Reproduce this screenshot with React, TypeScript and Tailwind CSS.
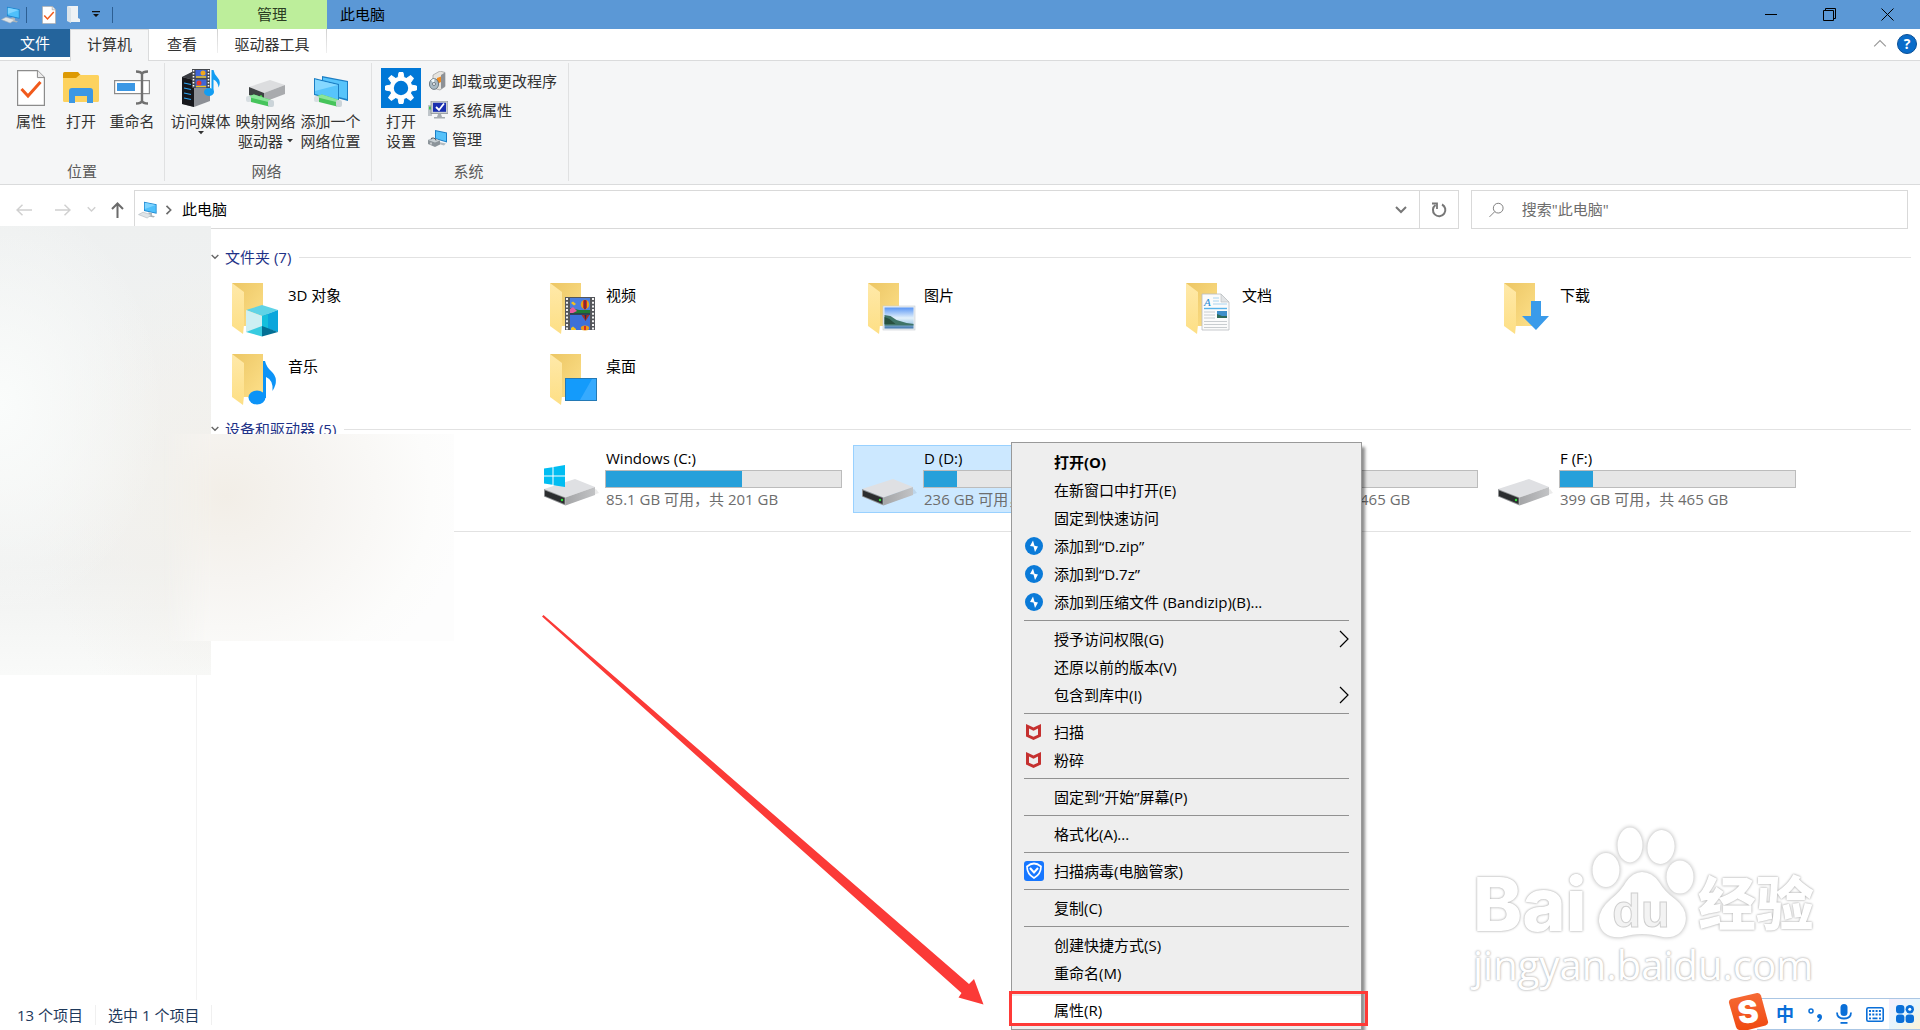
import type { ReactNode } from "react";

type IconProps = { className?: string };

/* ---------- small icons ---------- */

function PcIcon({ className }: IconProps) {
  return (
    <svg viewBox="0 0 20 18" className={className} aria-hidden="true">
      <path d="M6 0.8 18.6 3.2v9.6L6 10z" fill="#1b86cf" />
      <path d="M6.8 1.8 17.8 3.9v7.9L6.8 9.3z" fill="#4fc0fb" />
      <path d="M6.8 1.8 17.8 3.9 6.8 8z" fill="#7fd4ff" />
      <path d="M10.5 11.2 14 12v2.4l3 .8-1.5 1.3-6.5-1.6 1.5-.7z" fill="#aab4bb" />
      <path d="M0.5 13.6 5 11.2l8.6 2.6-4.4 3.2z" fill="#dfe4e7" stroke="#aeb7bd" strokeWidth="0.6" />
    </svg>
  );
}

function CheckDoc({ className }: IconProps) {
  return (
    <svg viewBox="0 0 28 36" className={className} aria-hidden="true">
      <path d="M.6.6h19.8l7 7v27.8H.6z" fill="#fff" stroke="#8c8c8c" strokeWidth="1.2" />
      <path d="M20.4.6v7h7" fill="#ececec" stroke="#8c8c8c" strokeWidth="1" />
      <path d="m4.5 19 6.5 7L23.5 12" fill="none" stroke="#f15a1c" strokeWidth="3" />
    </svg>
  );
}

function OpenFolder() {
  return (
    <svg width="36" height="32" viewBox="0 0 36 32" aria-hidden="true">
      <path d="M0 1.5Q0 0 1.5 0H15l3 3.5L16 7H0z" fill="#dd9a04" />
      <path d="M0 6h13l3.5-3H34.500q1.500 0 1.500 1.500V28.500Q36 30 34.500 30H1.500Q0 30 0 28.500z" fill="#fdd25e" />
      <path d="M6 31V19q0-3 3-3h18q3 0 3 3v12h-6v-7H12v7z" fill="#3b97e4" />
    </svg>
  );
}

function RenameIcon() {
  return (
    <svg width="36" height="36" viewBox="0 0 36 36" aria-hidden="true">
      <rect x=".6" y="10.600" width="34.800" height="13" fill="#fff" stroke="#8b8b8b" strokeWidth="1.200" />
      <rect x="3" y="13" width="18" height="8" fill="#3b97e4" />
      <path d="M22 1.500q5 0 6 2.500 1-2.500 6-2.500M22 33.500q5 0 6-2.500 1 2.500 6 2.500M28 4v27" fill="none" stroke="#707070" strokeWidth="2.400" />
    </svg>
  );
}

function MediaIcon() {
  return (
    <svg width="40" height="38" viewBox="0 0 40 38" aria-hidden="true">
      <path d="M1 8 11 3l18 2v27L13 38 1 35z" fill="#8d9096" />
      <path d="M1 8l12 3v27L1 35z" fill="#17181c" />
      <path d="M1 8 11 3l9 1-7 7z" fill="#3a3c42" />
      <path d="M3 14l7 1.500M3 19l7 1.500M3 24l7 1.500M3 29l7 1.500" stroke="#2fa6f5" strokeWidth="1.200" />
      <rect x="11" y="0" width="18" height="19" fill="#44474c" />
      <path d="M12.500 1v17M27.500 1v17" stroke="#fff" strokeWidth="1.600" strokeDasharray="1.500 1.500" />
      <rect x="14.500" y="1" width="11" height="8" fill="#3f66d8" />
      <rect x="14.500" y="10.500" width="11" height="8" fill="#3f66d8" />
      <circle cx="22" cy="4" r="2.500" fill="#f2a81c" />
      <circle cx="18" cy="14" r="2.500" fill="#e93c2f" />
      <path d="M15 8h10M15 17.500h10" stroke="#f3c61d" strokeWidth="1.500" />
      <ellipse cx="28" cy="23" rx="5" ry="4" fill="#139df2" />
      <path d="M30.500 23V1h2q1 5 4 7.500 4 4 1 10-.5-6-5-8V23z" fill="#139df2" />
    </svg>
  );
}

function Cable() {
  return (
    <>
      <path d="M3 0 8-1.500 25 4l-2 6.500L5 6z" fill="#46c45b" />
      <path d="M3 0 8-1.500 25 4l-.8 2.500L4 1.500z" fill="#8be59a" />
      <rect x="0" y="0" width="5" height="6" rx="2" fill="#d7dee2" />
      <rect x="22" y="4" width="6" height="7" rx="2" fill="#cbd4d9" />
    </>
  );
}

function NetDriveIcon() {
  return (
    <svg width="40" height="38" viewBox="0 -9 40 38" aria-hidden="true">
      <path d="M3 9 24 2l15 5-21 8z" fill="#dcdddf" />
      <path d="M3 9l15 6v8L3 17z" fill="#3e4143" />
      <path d="M18 15 39 7v9l-21 8z" fill="#a9abae" />
      <circle cx="15" cy="18.500" r="1.200" fill="#45e04a" />
      <g transform="translate(0 18)">
        <Cable />
      </g>
    </svg>
  );
}

function NetPlaceIcon() {
  return (
    <svg width="36" height="38" viewBox="0 -6 36 38" aria-hidden="true">
      <path d="M9 1 35 6v20L9 19z" fill="#1c7ec4" />
      <path d="M10 2.500 34 7v17L10 18z" fill="#57c4fb" />
      <path d="M1 3l25 6v18L1 20z" fill="#1c7ec4" />
      <path d="M2 4.500l23 5.500v15.500L2 19z" fill="#57c4fb" />
      <path d="M2 4.500 25 10 2 16z" fill="#86d8ff" />
      <g transform="translate(1 21)">
        <Cable />
      </g>
    </svg>
  );
}

function SettingsTile() {
  const teeth = [0, 45, 90, 135, 180, 225, 270, 315];
  return (
    <svg width="40" height="40" viewBox="0 0 40 40" aria-hidden="true">
      <rect width="40" height="40" fill="#0078d7" />
      {teeth.map((a) => (
        <path key={a} d="M17 10l1-5.500h4l1 5.500z" fill="#fff" stroke="#fff" strokeLinejoin="round" transform={`rotate(${a} 20 20)`} />
      ))}
      <circle cx="20" cy="20" r="9.200" fill="none" stroke="#fff" strokeWidth="4" />
    </svg>
  );
}

function UninstallIcon() {
  return (
    <svg width="17" height="20" viewBox="0 0 17 20" aria-hidden="true">
      <path d="M4 4 11 0l5 1.500v14L11 19l-7-2z" fill="#e6e4df" stroke="#9a9a9a" strokeWidth=".7" />
      <path d="M12 4l4-2.500v14L12 18z" fill="#8d9196" />
      <path d="M8 7l4-1.500V11l-4 2z" fill="#ee8b22" />
      <ellipse cx="5" cy="13" rx="4.600" ry="5.400" fill="#a9bac4" stroke="#59666e" strokeWidth=".8" />
      <path d="M5 13 2 9l3.500-1.500z" fill="#f2fafd" />
      <circle cx="5" cy="13" r="1.500" fill="#fff" stroke="#59666e" strokeWidth=".8" />
    </svg>
  );
}

function SystemPropsIcon() {
  return (
    <svg width="20" height="18" viewBox="0 0 20 18" aria-hidden="true">
      <rect x="0" y="4" width="4" height="11" fill="#bfc5ca" />
      <rect x="1" y="5.500" width="2" height="3" fill="#3fc14a" />
      <rect x="3" y="0" width="17" height="12.500" fill="#c9ced2" stroke="#81888d" strokeWidth=".7" />
      <rect x="5" y="1.800" width="13" height="9" fill="#1a2fb0" />
      <path d="m8 6 3 3 5-6.500" fill="none" stroke="#fff" strokeWidth="1.800" />
      <path d="M10 13h3l1 3h3v1.500H6V16h3z" fill="#a5abb0" />
    </svg>
  );
}

function ManageIcon() {
  return (
    <svg width="20" height="17" viewBox="0 0 20 17" aria-hidden="true">
      <path d="M7 0l12 2.500v10L7 9z" fill="#1b7ec6" />
      <path d="M8 1.200l10 2v8L8 8.300z" fill="#56c2fa" />
      <path d="M11 12l7 1.500-2 2-7-2z" fill="#b4bcc2" />
      <path d="M0 10l5-2 7 2.500v4L7 17l-7-3z" fill="#8c949a" />
      <path d="M0 10l5-2 7 2.500-5 2z" fill="#c9d0d4" />
      <path d="M3 9.500q0-2 2.500-1.500T8 10.500" fill="none" stroke="#565d62" />
      <path d="M3 12.500v2" stroke="#fff" />
    </svg>
  );
}

function Chevron({ dir, className }: { dir: "down" | "up" | "right"; className?: string }) {
  const d = { down: "m1 3 5 5 5-5", up: "m1 8 5-5 5 5", right: "m3 1 5 5-5 5" }[dir];
  return (
    <svg viewBox="0 0 12 12" className={className} fill="none" stroke="currentColor" aria-hidden="true">
      <path d={d} />
    </svg>
  );
}

function Caret({ className }: IconProps) {
  return (
    <svg viewBox="0 0 6 4" className={className} fill="currentColor" aria-hidden="true">
      <path d="M0 0h6L3 3.200z" />
    </svg>
  );
}

/* ---------- tile icons, drawn on the tile's own 69x66 icon area ---------- */

function FolderIcon({ children }: { children: ReactNode }) {
  return (
    <svg width="69" height="66" viewBox="0 0 69 66" className="shrink-0" aria-hidden="true">
      <defs>
        <linearGradient id="folderBack" x1="0" y1="0" x2="1" y2="1">
          <stop offset="0" stopColor="#ecc664" />
          <stop offset="1" stopColor="#fde08a" />
        </linearGradient>
        <linearGradient id="folderFlap" x1="0" y1="0" x2="0" y2="1">
          <stop offset="0" stopColor="#ffe9a9" />
          <stop offset="1" stopColor="#fddf85" />
        </linearGradient>
      </defs>
      <path d="M14 8h31v43H24z" fill="url(#folderBack)" />
      <path d="M14 8l12 9v33l-1 9-11-8z" fill="url(#folderFlap)" />
      {children}
    </svg>
  );
}

function CubeArt() {
  return (
    <>
      <path d="M44 30l16 5-16 6-16-6z" fill="#5fd3e6" />
      <path d="M28 35l16 6v11l-16 5z" fill="#cdeff3" />
      <path d="M60 35l-16 6v11l16 5z" fill="#0ba6dc" />
      <path d="M44 41v11l6 2V39z" fill="#14bfdc" />
      <path d="M28 57l16-6 0 10.500z" fill="#38cbe0" />
      <path d="M60 57l-16-6v10.500z" fill="#036f94" />
    </>
  );
}

function FilmArt() {
  return (
    <>
      <rect x="29" y="22" width="30" height="33" fill="#54565b" />
      <path d="M31 23v32M57 23v32" stroke="#f4f4f4" strokeWidth="2" strokeDasharray="2 1.700" />
      <rect x="34" y="23" width="20" height="15.500" fill="#4a7ee0" />
      <rect x="34" y="39.500" width="20" height="15.500" fill="#3d70d8" />
      <path d="M34 33l5 1 4 1h11v3.500H34z" fill="#1f7a35" />
      <path d="M34 34l3-2 4 4-4 2h-3z" fill="#e85aa0" />
      <path d="M35 28l2-1.500 3 2.500-2 1.500z" fill="#f4c220" />
      <ellipse cx="49" cy="29.500" rx="4.200" ry="4.700" fill="#e7a417" />
      <path d="M47 25.500q2-1 4 0v7l-2 2.500-2-2.500z" fill="#d62f22" />
      <path d="M48.500 25h1v9h-1z" fill="#232a55" />
      <path d="M45.500 40h8l-4 6z" fill="#a8301f" />
      <path d="M48.500 40h2l-1 6z" fill="#232a55" />
      <ellipse cx="49" cy="53" rx="4.200" ry="2.500" fill="#ec9b17" />
      <path d="M48 51h2v4h-2z" fill="#d62f22" />
      <path d="M35 53l2-1.500 3 2.500v1h-5z" fill="#f4c220" />
      <path d="M34 38.500h20v1H34z" fill="#1d1f24" />
    </>
  );
}

function PhotoArt() {
  return (
    <>
      <defs>
        <linearGradient id="sky" x1="0" y1="0" x2="0" y2="1">
          <stop offset="0" stopColor="#5a96f5" />
          <stop offset=".5" stopColor="#e3f1fb" />
          <stop offset=".72" stopColor="#b4d5ec" />
          <stop offset="1" stopColor="#3b72aa" />
        </linearGradient>
      </defs>
      <rect x="29" y="31" width="32" height="24" fill="#e9eef1" stroke="#c8ced2" strokeWidth=".6" />
      <rect x="30.500" y="32.500" width="29" height="21" fill="url(#sky)" />
      <path d="M30.500 40l6 1 6 4 10 3 7 1v1.500h-29z" fill="#3f7467" />
      <path d="M30.500 42l5 2 6 5h-11z" fill="#27503f" />
    </>
  );
}

function DocArt() {
  return (
    <>
      <path d="M30 19h19l8 8v28H30z" fill="#fbfbfb" stroke="#b9bdc0" strokeWidth=".8" />
      <path d="M49 19v8h8z" fill="#e2e4e6" stroke="#b9bdc0" strokeWidth=".6" />
      <text x="32" y="31" fontSize="11" fontStyle="italic" fontFamily="Liberation Serif, serif" fill="#1f8ad2">A</text>
      <path d="M41 23h6M41 26h6M41 29h14" stroke="#a9d4ef" />
      <path d="M32 33.500h23" stroke="#57b3ea" strokeWidth="1.400" />
      <path d="M32 37h11M32 40h11M32 43h11M32 46.500h23M32 49.500h23M32 52.500h23" stroke="#c9cdd0" />
      <rect x="45" y="36" width="10" height="7" fill="#3f8fc9" />
      <path d="M45 39l5 2h5v2H45z" fill="#2e6a58" />
    </>
  );
}

function DriveIcon({ system }: { system?: boolean }) {
  return (
    <svg width="69" height="66" viewBox="0 0 69 66" className="shrink-0" aria-hidden="true">
      <defs>
        <linearGradient id="driveSide" x1="0" y1="0" x2="1" y2="0">
          <stop offset="0" stopColor="#a4a5a7" />
          <stop offset="1" stopColor="#c2c3c5" />
        </linearGradient>
      </defs>
      <path d="M30 59l33-12-3-4-30 10z" fill="#000" opacity=".08" />
      <path d="M8 43l31-10 20 8-29.500 10.500z" fill="#dfe0e3" />
      <path d="M29.500 51.500 59 41v8L29.500 59.500z" fill="url(#driveSide)" />
      <path d="M8 43l21.500 8.500v8L8 50.500z" fill="#8f9193" />
      <path d="M9 44.500l19.500 7.500v6L9 50z" fill="#2b2d2f" />
      <circle cx="26" cy="54" r="1.200" fill="#31e13a" />
      {system && (
        <path d="M8 22.500l8.500-1.300v8.300H8zM17.500 21l11.500-2v10.500H17.500zM8 30.500h8.500v8.300L8 37.500zM17.500 30.500H29V41l-11.500-1.800z" fill="#00bdf2" />
      )}
    </svg>
  );
}

/* ---------- data ---------- */

const folders: { name: string; art: ReactNode }[] = [
  { name: "3D 对象", art: <CubeArt /> },
  { name: "视频", art: <FilmArt /> },
  { name: "图片", art: <PhotoArt /> },
  { name: "文档", art: <DocArt /> },
  { name: "下载", art: <path d="M41 26h10v15h8L46 55 32 41h9z" fill="#3a9bea" /> },
  {
    name: "音乐",
    art: (
      <>
        <ellipse cx="39" cy="51.500" rx="8.500" ry="7" fill="#0c93f7" />
        <path d="M45 52V15h2q1.500 6 6 10 9 8 1.500 20 1-11-6.500-14v21z" fill="#0c93f7" />
      </>
    ),
  },
  {
    name: "桌面",
    art: (
      <>
        <rect x="29.500" y="32.500" width="31" height="22" fill="#149bfb" stroke="#2379b5" />
        <path d="M44 54l12-21h4v21z" fill="#44b1ff" opacity=".7" />
      </>
    ),
  },
];

const drives = [
  { name: "Windows (C:)", free: "85.1 GB", total: "201 GB", used: 58, system: true },
  { name: "D (D:)", free: "236 GB", total: "276 GB", used: 14, selected: true },
  { name: "E (E:)", free: "399 GB", total: "465 GB", used: 14 },
  { name: "F (F:)", free: "399 GB", total: "465 GB", used: 14 },
];

type Entry = { label: string; icon?: ReactNode; bold?: boolean; sub?: boolean; marked?: boolean };

const zipIcon = (
  <svg width="18" height="18" viewBox="0 0 18 18" aria-hidden="true">
    <circle cx="9" cy="9" r="9" fill="#0a7ad8" />
    <path d="M8 3.500 5 9l3.500.500L10 15l3-5.500-3.500-.8z" fill="#fff" />
  </svg>
);

const mcafeeIcon = (
  <svg width="15" height="16" viewBox="0 0 15 16" aria-hidden="true">
    <path d="M0 0l7.500 3.500L15 0v12.500L7.500 16 0 12.500zM3 4.500v6.300l4.500 2 4.500-2V4.500L7.500 6.800z" fill="#c5302f" fillRule="evenodd" />
  </svg>
);

const shieldIcon = (
  <svg width="20" height="20" viewBox="0 0 20 20" aria-hidden="true">
    <rect width="20" height="20" rx="3" fill="#1777ff" />
    <path d="M3 5.500Q10-.5 17 5.500q0 7.500-7 11.500Q3 13 3 5.500z" fill="none" stroke="#fff" strokeWidth="1.700" />
    <path d="M6 7l4 4.500L14 7" fill="none" stroke="#fff" strokeWidth="2" />
  </svg>
);

const menu: Entry[][] = [
  [
    { label: "打开(O)", bold: true },
    { label: "在新窗口中打开(E)" },
    { label: "固定到快速访问" },
    { label: "添加到“D.zip”", icon: zipIcon },
    { label: "添加到“D.7z”", icon: zipIcon },
    { label: "添加到压缩文件 (Bandizip)(B)...", icon: zipIcon },
  ],
  [{ label: "授予访问权限(G)", sub: true }, { label: "还原以前的版本(V)" }, { label: "包含到库中(I)", sub: true }],
  [
    { label: "扫描", icon: mcafeeIcon },
    { label: "粉碎", icon: mcafeeIcon },
  ],
  [{ label: "固定到“开始”屏幕(P)" }],
  [{ label: "格式化(A)..." }],
  [{ label: "扫描病毒(电脑管家)", icon: shieldIcon }],
  [{ label: "复制(C)" }],
  [{ label: "创建快捷方式(S)" }, { label: "重命名(M)" }],
  [{ label: "属性(R)", marked: true }],
];

/* ---------- window chrome ---------- */

function TitleBar() {
  return (
    <header className="flex h-[29px] shrink-0 bg-[#5b98d6]">
      <div className="flex w-[217px] items-center">
        <PcIcon className="ml-px h-[18px] w-5" />
        <span className="ml-[5px] h-4 w-px bg-[#2d5f93]" />
        <button aria-label="属性" className="ml-[15px]">
          <CheckDoc className="h-[18px] w-[14px]" />
        </button>
        <button aria-label="新建文件夹" className="ml-[11px]">
          <svg width="13" height="17" viewBox="0 0 13 17" aria-hidden="true">
            <path d="M1 0h10v12l2 1v3H4z" fill="#eef2f5" />
            <path d="M0 0l4 2v15l-4-2z" fill="#dbe4ea" />
          </svg>
        </button>
        <button aria-label="自定义快速访问工具栏" className="ml-3">
          <svg width="8" height="7" viewBox="0 0 8 7" aria-hidden="true">
            <path d="M0 0h8v1.200H0zM1 3h6L4 6z" fill="#111" />
          </svg>
        </button>
        <span className="ml-3 h-4 w-px bg-[#2d5f93]" />
      </div>
      <div className="flex w-[110px] items-center justify-center bg-[#bdee9b] pb-[2px] text-[#2b3d22]">管理</div>
      <h1 className="ml-[13px] flex items-center pb-[2px] text-black">此电脑</h1>
      <div className="ml-auto flex pr-1 text-black">
        <button aria-label="最小化" className="flex w-[58px] items-center justify-center">
          <span className="h-px w-3 bg-black" />
        </button>
        <button aria-label="还原" className="flex w-[58px] items-center justify-center">
          <svg width="13" height="13" viewBox="0 0 13 13" fill="none" stroke="currentColor" aria-hidden="true">
            <path d="M.5 2.500h10v10H.5zM2.500 2.500v-2h10v10h-2" />
          </svg>
        </button>
        <button aria-label="关闭" className="flex w-[58px] items-center justify-center">
          <svg width="13" height="13" viewBox="0 0 13 13" stroke="currentColor" aria-hidden="true">
            <path d="m.5.5 12 12M12.500.5l-12 12" />
          </svg>
        </button>
      </div>
    </header>
  );
}

function Tabs() {
  return (
    <nav className="flex h-8 shrink-0 border-b border-[#dadbdc] text-[#333]">
      <button className="mb-[3px] w-[70px] bg-[#24649c] text-white">文件</button>
      <button className="-mb-px w-[79px] border-x border-t border-[#dadbdc] bg-[#f5f6f7] pb-[3px]">计算机</button>
      <button className="w-[68px] pr-[2px] pb-[2px]">查看</button>
      <div className="flex">
        <span className="h-6 w-px bg-linear-to-b from-[#d0d0d0] to-[#efefef]" />
        <button className="w-[108px] pb-[2px]">驱动器工具</button>
        <span className="h-6 w-px bg-linear-to-b from-[#d0d0d0] to-[#efefef]" />
      </div>
      <div className="ml-auto flex items-center gap-[10px] pr-[3px] pb-[2px]">
        <button aria-label="最小化功能区" className="text-[#999]">
          <Chevron dir="up" className="h-[14px] w-[14px]" />
        </button>
        <button aria-label="帮助" className="h-5 w-5 rounded-full border border-[#0a4f96] bg-[#0a6cc9] text-sm leading-[18px] font-bold text-white">
          ?
        </button>
      </div>
    </nav>
  );
}

function BigButton({ icon, lines, caret, className }: { icon: ReactNode; lines: string[]; caret?: "below" | "inline"; className: string }) {
  return (
    <button className={`flex flex-col items-center ${className}`}>
      <span className="mb-[3px] flex h-10 items-center justify-center">{icon}</span>
      {lines.map((line, i) => (
        <span key={line} className="flex items-center whitespace-nowrap">
          {line}
          {caret === "inline" && i === lines.length - 1 && <Caret className="ml-1 h-1 w-[6px]" />}
        </span>
      ))}
      {caret === "below" && <Caret className="h-1 w-[6px]" />}
    </button>
  );
}

function RibbonGroup({ label, children, className }: { label: string; children: ReactNode; className: string }) {
  return (
    <section className={`flex flex-col ${className}`}>
      <div className="flex flex-1 pt-[7px]">{children}</div>
      <h2 className="text-center text-[#5a5a5a]">{label}</h2>
    </section>
  );
}

function Ribbon() {
  const divider = <span className="mt-[2px] w-px bg-[#e0e1e2]" />;
  return (
    <div className="flex h-[124px] shrink-0 border-b border-[#dadbdc] bg-[#f5f6f7] pb-[3px] text-[#333]">
      <RibbonGroup label="位置" className="w-[164px]">
        <BigButton className="ml-[6px] w-[50px]" icon={<CheckDoc className="h-9 w-7" />} lines={["属性"]} />
        <BigButton className="w-[50px]" icon={<OpenFolder />} lines={["打开"]} />
        <BigButton className="w-[52px]" icon={<RenameIcon />} lines={["重命名"]} />
      </RibbonGroup>
      {divider}
      <RibbonGroup label="网络" className="w-[206px] pr-[3px]">
        <BigButton className="ml-[3px] w-[65px]" icon={<MediaIcon />} lines={["访问媒体"]} caret="below" />
        <BigButton className="w-[65px]" icon={<NetDriveIcon />} lines={["映射网络", "驱动器"]} caret="inline" />
        <BigButton className="w-[65px]" icon={<NetPlaceIcon />} lines={["添加一个", "网络位置"]} />
      </RibbonGroup>
      {divider}
      <RibbonGroup label="系统" className="w-[196px] pr-[3px]">
        <BigButton className="ml-[3px] w-[52px]" icon={<SettingsTile />} lines={["打开", "设置"]} />
        <div className="flex flex-col">
          {[
            { icon: <UninstallIcon />, label: "卸载或更改程序" },
            { icon: <SystemPropsIcon />, label: "系统属性" },
            { icon: <ManageIcon />, label: "管理" },
          ].map((b) => (
            <button key={b.label} className="flex h-[29px] items-center pb-1">
              <span className="flex w-[25px] justify-center pr-1">{b.icon}</span>
              {b.label}
            </button>
          ))}
        </div>
      </RibbonGroup>
      {divider}
    </div>
  );
}

function AddressBar() {
  return (
    <div className="flex shrink-0 pt-[5px] pr-3">
      <div className="flex w-[134px] items-center pl-4 text-[#d0d0d0]">
        <button aria-label="后退">
          <svg width="16" height="12" viewBox="0 0 16 12" fill="none" stroke="currentColor" strokeWidth="1.500" aria-hidden="true">
            <path d="M6.500.8 1 6l5.500 5.200M1 6h15" />
          </svg>
        </button>
        <button aria-label="前进" className="ml-[23px]">
          <svg width="16" height="12" viewBox="0 0 16 12" fill="none" stroke="currentColor" strokeWidth="1.500" aria-hidden="true">
            <path d="M9.500.8 15 6l-5.500 5.200M15 6H0" />
          </svg>
        </button>
        <button aria-label="最近浏览的位置" className="ml-4">
          <Chevron dir="down" className="h-[9px] w-[9px] stroke-2" />
        </button>
        <button aria-label="上移" className="ml-[15px] text-[#6b6b6b]">
          <svg width="13" height="16" viewBox="0 0 13 16" fill="none" stroke="currentColor" strokeWidth="2" aria-hidden="true">
            <path d="M1 7l5.500-5.500L12 7M6.500 1.500V16" />
          </svg>
        </button>
      </div>
      <div className="flex h-[39px] flex-1 items-center border border-[#d9d9d9] pl-[3px]">
        <PcIcon className="h-[18px] w-5" />
        <Chevron dir="right" className="ml-[6px] h-[10px] w-[10px] stroke-2 text-[#6b6b6b]" />
        <button className="ml-2 pb-[2px] text-black">此电脑</button>
        <button aria-label="以前的位置" className="mr-3 ml-auto text-[#777]">
          <Chevron dir="down" className="h-3 w-3 stroke-2" />
        </button>
        <button aria-label="刷新" className="flex h-full w-[39px] items-center justify-center border-l border-[#d9d9d9] text-[#777]">
          <svg width="16" height="16" viewBox="0 0 16 16" fill="none" stroke="currentColor" strokeWidth="2" aria-hidden="true">
            <path d="M11 2.500A6.200 6.200 0 1 1 4.500 3" />
            <path d="M1 1.500h5V7" strokeWidth="1.800" />
          </svg>
        </button>
      </div>
      <label className="ml-3 flex h-[39px] w-[437px] items-center border border-[#d9d9d9] pl-[17px]">
        <svg width="16" height="16" viewBox="0 0 16 16" fill="none" stroke="#777" aria-hidden="true">
          <circle cx="10" cy="6" r="5.300" />
          <path d="M6.200 9.800.5 15.500" />
        </svg>
        <input
          type="search"
          aria-label="搜索"
          placeholder={'搜索"此电脑"'}
          className="ml-[18px] w-full bg-transparent pb-[2px] outline-none placeholder:text-[#6d6d6d] placeholder:opacity-100"
        />
      </label>
    </div>
  );
}

/* ---------- file view ---------- */

function GroupHeader({ title, count }: { title: string; count: number }) {
  return (
    <h2 className="ml-[14px] flex h-5 items-center text-[#1e3287]">
      <Chevron dir="down" className="mr-[6px] h-2 w-2 stroke-2 text-[#666]" />
      <span className="pb-px">
        {title} ({count})
      </span>
      <span className="ml-2 h-px flex-1 bg-[#e2e2e2]" />
    </h2>
  );
}

function DriveTile({ name, free, total, used, system, selected }: (typeof drives)[number]) {
  return (
    <li className={`flex h-[68px] border ${selected ? "border-[#99d1ff] bg-[#cce8ff]" : "border-transparent"}`}>
      <DriveIcon system={system} />
      <div className="w-[237px] pt-[2px]">
        <p className="pl-px text-black">{name}</p>
        <div className="mt-[2px] mb-px h-[18px] border border-[#bcbcbc] bg-[#e6e6e6]">
          <div className="h-full bg-[#26a0da]" style={{ width: `${used}%` }} />
        </div>
        <p className="pl-px whitespace-nowrap text-[#6d6d6d]">
          {free} 可用，共 {total}
        </p>
      </div>
    </li>
  );
}

function FileView() {
  return (
    <main className="flex-1 pt-[18px] pr-[9px]">
      <GroupHeader title="文件夹" count={7} />
      <ul className="mt-[7px] mb-[6px] ml-5 grid grid-cols-[repeat(auto-fill,318px)] gap-y-[3px]">
        {folders.map((f) => (
          <li key={f.name} className="flex h-[68px] border border-transparent text-black">
            <FolderIcon>{f.art}</FolderIcon>
            <span className="pt-[10px] pl-px">{f.name}</span>
          </li>
        ))}
      </ul>
      <GroupHeader title="设备和驱动器" count={5} />
      <ul className="mt-[6px] ml-5 grid grid-cols-[repeat(auto-fill,318px)] gap-y-[3px]">
        <li className="h-[68px]" />
        {drives.map((d) => (
          <DriveTile key={d.name} {...d} />
        ))}
      </ul>
      <hr className="mt-[18px] border-[#e2e2e2]" />
    </main>
  );
}

/* soft patches that hide the tree and the first drive */
function Patches() {
  return (
    <>
      <div className="absolute -top-[3px] left-0 h-[449px] w-[211px] bg-[radial-gradient(ellipse_at_0%_40%,#fafcfb_0%,#fafcfb00_55%),radial-gradient(ellipse_at_100%_60%,#f2f0eb_0%,#f2f0eb00_60%),linear-gradient(to_bottom,#eef0f0_0%,#f2f3f2_55%,#f0f1f0_75%,#f9faf9_100%)]" />
      <div className="absolute top-[205px] left-[162px] h-[207px] w-[292px] bg-[radial-gradient(ellipse_240px_210px_at_22%_30%,#f2eee7_0%,#f6f4f1_40%,#fcfcfb_85%,#fdfdfd_100%)] [mask-image:linear-gradient(to_right,transparent,black_50px)]" />
    </>
  );
}

function StatusBar() {
  return (
    <footer className="flex h-[30px] shrink-0 items-center pl-[17px] text-[#1e395b]">
      <span className="border-r border-[#f0f0f0] pr-3">13 个项目</span>
      <span className="border-r border-[#f0f0f0] px-3">选中 1 个项目</span>
    </footer>
  );
}

/* ---------- overlays ---------- */

function ContextMenu() {
  return (
    <div className="absolute top-[442px] left-[1011px] w-[351px] border border-[#999] bg-[#eee] py-[5px] text-black shadow-[4px_4px_3px_-1px_rgba(0,0,0,0.45)]">
      {menu.map((group, i) => (
        <div key={group[0].label}>
          {i > 0 && <hr className="mx-3 my-1 border-[#919191]" />}
          {group.map((e) => (
            <button key={e.label} className={`relative flex h-7 w-full items-center text-left ${e.marked ? "bg-white" : ""} ${e.bold ? "font-bold" : ""}`}>
              <span className="flex w-[42px] justify-center pl-px">{e.icon}</span>
              {e.label}
              {e.sub && (
                <svg width="10" height="18" viewBox="0 0 10 18" fill="none" stroke="currentColor" strokeWidth="1.200" className="mr-3 ml-auto" aria-hidden="true">
                  <path d="m1 1 8 8-8 8" />
                </svg>
              )}
              {e.marked && <span className="absolute -top-[5px] -right-[7px] -bottom-[2px] -left-[3px] border-3 border-[#ff3a37]" />}
            </button>
          ))}
        </div>
      ))}
    </div>
  );
}

function Arrow() {
  return (
    <svg width="442" height="390" viewBox="0 0 442 390" className="pointer-events-none absolute top-[615px] left-[542px]" aria-hidden="true">
      <path d="M0 1.500 1.500 0 427 369l5-5L441.500 389.500 416.500 382.500l3-4.500L215 195z" fill="#fb3a37" />
    </svg>
  );
}

function Watermark() {
  return (
    <div className="pointer-events-none absolute right-[101px] bottom-[38px] w-[346px] text-white [text-shadow:0_0_2px_#aaa,0_0_3px_#ccc]">
      <div className="flex h-[118px] items-end">
        <span className="w-[117px] font-[Inter] text-[74px] leading-[76px] font-extrabold">Bai</span>
        <svg width="108" height="116" viewBox="0 0 108 116" className="shrink-0 drop-shadow-[0_0_2px_#aaa]" aria-hidden="true">
          <g fill="#fff">
            <ellipse cx="16" cy="44" rx="13.500" ry="17" />
            <ellipse cx="40" cy="19" rx="12.500" ry="17.500" />
            <ellipse cx="71" cy="21" rx="13.500" ry="17" transform="rotate(8 71 21)" />
            <ellipse cx="90" cy="51" rx="13.500" ry="16.500" />
            <path d="M52 46q10 0 17 10 6 10 16 17 14 11 10 25-5 15-22 13-12-3-21-3t-20 3Q12 113 9 96q-1-12 12-23 10-8 15-17 7-10 16-10z" />
          </g>
          <text x="51" y="101" textAnchor="middle" fontSize="47" fontWeight="bold" fontFamily="Liberation Sans, sans-serif" fill="#f3f3f3" stroke="#cfcfcf" strokeWidth="1" className="[text-shadow:none]">du</text>
        </svg>
        <span className="text-[58px] leading-[78px] font-black whitespace-nowrap">经验</span>
      </div>
      <p className="pb-[5px] text-[40px] leading-[45px] whitespace-nowrap">jingyan.baidu.com</p>
    </div>
  );
}

function ImeBar() {
  return (
    <div className="absolute right-0 bottom-0 flex h-8 w-[163px] items-center border-y border-[#aac6e4] bg-white pl-[18px] text-[#0a6fd8]">
      <svg width="42" height="38" viewBox="0 0 42 38" className="absolute -bottom-px -left-[29px]" aria-hidden="true">
        <defs>
          <linearGradient id="sogou" x1="0" y1="0" x2="0" y2="1">
            <stop offset="0" stopColor="#f66a35" />
            <stop offset="1" stopColor="#f04a12" />
          </linearGradient>
        </defs>
        <path d="M3 7 29 1q3-.5 4 2.500l7 26q.5 3-2.500 4L20 38h-9q-2 0-3-3L1 11Q.5 8 3 7z" fill="url(#sogou)" />
        <text x="20" y="31" textAnchor="middle" fontSize="31" fontWeight="900" fontFamily="Inter, sans-serif" fill="#fff" transform="rotate(-8 20 20)">S</text>
      </svg>
      <button className="w-5 text-[18px] leading-5 font-bold">中</button>
      <button aria-label="中文标点" className="ml-3">
        <svg width="16" height="16" viewBox="0 0 16 16" aria-hidden="true">
          <circle cx="4" cy="5" r="2" fill="none" stroke="currentColor" strokeWidth="1.500" />
          <path d="M12 8q3 0 3 3 0 3-4 5l-.5-1q2-1.500 2-2.500-2 0-2.500-2 0-2 2-2.500z" fill="currentColor" />
        </svg>
      </button>
      <button aria-label="语音" className="ml-[13px]">
        <svg width="16" height="20" viewBox="0 0 16 20" aria-hidden="true">
          <rect x="4.500" y="0" width="7" height="12" rx="3.500" fill="currentColor" />
          <path d="M1 8.500q0 6 7 6t7-6" fill="none" stroke="currentColor" strokeWidth="1.800" />
          <path d="M4.500 18h7v1.800h-7z" fill="currentColor" />
        </svg>
      </button>
      <button aria-label="软键盘" className="ml-[14px]">
        <svg width="18" height="15" viewBox="0 0 18 15" aria-hidden="true">
          <rect x=".8" y=".8" width="16.400" height="13.400" rx="1.500" fill="#fff" stroke="currentColor" strokeWidth="1.600" />
          <path d="M3 4h12M3 7.500h12" stroke="currentColor" strokeWidth="2" strokeDasharray="2 1.300" />
          <path d="M3 11.300h2M6.500 11.300h5M13 11.300h2" stroke="currentColor" strokeWidth="1.800" />
        </svg>
      </button>
      <button aria-label="工具箱" className="ml-auto flex h-full w-[31px] items-center justify-center bg-linear-to-br from-[#f6edfc] via-[#e6f6fd] to-[#fdf3d6]">
        <svg width="18" height="18" viewBox="0 0 18 18" fill="currentColor" aria-hidden="true">
          <rect x="0" y="0" width="8.400" height="8.400" rx="3" />
          <rect x="0" y="9.600" width="8.400" height="8.400" rx="3" />
          <rect x="9.600" y="9.600" width="8.400" height="8.400" rx="3" />
          <circle cx="13.800" cy="4.200" r="4.200" />
          <circle cx="13.800" cy="4.200" r="1.500" fill="#fff" />
        </svg>
      </button>
    </div>
  );
}

export default function App() {
  return (
    <div className="relative flex min-h-screen flex-col overflow-hidden bg-white font-['Open_Sans','Noto_Sans_CJK_SC',sans-serif] text-[15px] leading-5">
      <TitleBar />
      <Tabs />
      <Ribbon />
      <AddressBar />
      <div className="relative flex flex-1">
        <aside className="w-[197px] border-r border-[#f3f3f3]" />
        <FileView />
        <Patches />
      </div>
      <StatusBar />
      <Watermark />
      <ContextMenu />
      <Arrow />
      <ImeBar />
    </div>
  );
}
